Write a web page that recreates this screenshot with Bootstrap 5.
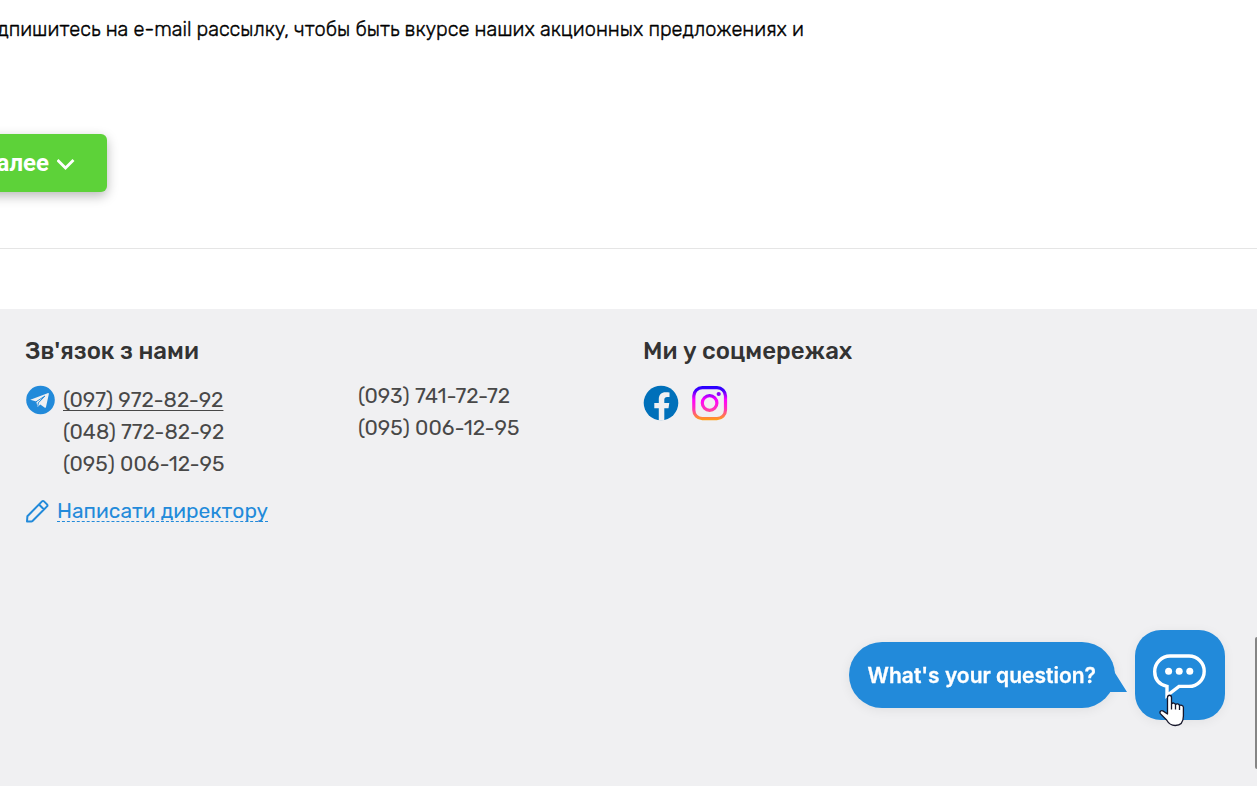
<!DOCTYPE html>
<html lang="uk">
<head>
<meta charset="utf-8">
<meta name="viewport" content="width=device-width, initial-scale=1">
<title>Контакти</title>
<link href="https://cdn.jsdelivr.net/npm/bootstrap@5.3.0/dist/css/bootstrap.min.css" rel="stylesheet">
<style>
  body { font-family: Rubik, Inter, Roboto, sans-serif; overflow: hidden; background: #fff; color: #000; }
  .intro-line { width: 804px; max-width: 100%; padding-top: 14px; font-size: 20px; line-height: 30px; font-weight: 300; -webkit-text-stroke: .4px #000; }
  .more-wrap { width: 107px; margin-top: 90px; margin-bottom: 56px; }
  .btn-more { --bs-btn-color: #fff; --bs-btn-bg: #5dd239; --bs-btn-hover-color: #fff; --bs-btn-hover-bg: #52c030;
    height: 58px; padding: 0 32px; border: 0; border-radius: 6px; font: 700 24px/58px Roboto, sans-serif;
    box-shadow: 0 4px 12px rgba(0,0,0,.28); }
  .divider { border-top: 1px solid #e5e5e5; height: 61px; }
  .site-footer { background: #f0f0f2; color: #484848; padding: 27px 25px 0; font-size: 21px; line-height: 32px; }
  .footer-grid { display: grid; grid-template-columns: 333fr 285fr 589fr; }
  .footer-title { font-size: 24px; line-height: 30px; font-weight: 500; color: #333; margin: 0; }
  .phones { padding-top: 44px; }
  .phones a, .phones-list a { color: inherit; text-decoration: none; }
  .phones-list { padding-top: 18px; }
  .phones-list a.main { text-decoration: underline; text-decoration-thickness: 1px; text-underline-offset: 3px; }
  .write { color: #228ada; margin-top: 19px; line-height: 28px; }
  .write a { color: inherit; text-decoration: none; line-height: 20px; border-bottom: 1px dashed #228ada; }
  .socials { padding-top: 19px; gap: 13px; }
  .chat { right: 32px; bottom: 66px; gap: 20px; }
  .chat-tip { background: #228ada; color: #fff; height: 66px; padding: 0 19px; border-radius: 33px; font: 600 21px/68px Inter, sans-serif; -webkit-text-stroke: .3px #fff; box-shadow: 0 2px 12px rgba(0,0,0,.07); }
  .chat-tail { right: -12px; bottom: 16px; }
  .btn-chat { --bs-btn-bg: #228ada; --bs-btn-hover-bg: #1d7fca; width: 90px; height: 90px; border: 0; border-radius: 26px; box-shadow: 0 2px 12px rgba(0,0,0,.06); }
  .pointer { left: 24px; top: 64px; pointer-events: none; }
  .scroll-mark { right: 0; bottom: 17px; width: 2px; height: 132px; background: #858585; border-radius: 2px 0 0 2px; }
</style>
</head>
<body class="min-vh-100 d-flex flex-column">
<main>
  <p class="intro-line d-flex justify-content-end text-nowrap mb-0">дпишитесь на e-mail рассылку, чтобы быть вкурсе наших акционных предложениях и</p>
  <div class="more-wrap d-flex justify-content-end">
    <button type="button" class="btn btn-more d-flex align-items-center flex-shrink-0 gap-2">Далее
      <svg width="18" height="14" viewBox="0 0 18 14" fill="none" stroke="#fff" stroke-width="2.8" aria-hidden="true"><path d="M.5 4 8.500 12 16.500 4"/></svg>
    </button>
  </div>
  <div class="divider"></div>
</main>
<footer class="site-footer flex-grow-1">
  <div class="footer-grid">
    <section>
      <h2 class="footer-title">Зв'язок з нами</h2>
      <div class="phones-list d-flex gap-2">
        <svg width="30" height="32" viewBox="0 0 30 32" class="flex-shrink-0" aria-hidden="true"><g transform="translate(0 1)"><circle cx="15.500" cy="15" r="14.300" fill="#228ada"/><path fill="#f0f0f2" d="M6 14.400 22.600 8.200c.8-.3 1.400.2 1.200 1.100l-2.800 12.600c-.2.900-.8 1.100-1.500.7l-4.200-3.100-2.100 2.100c-.5.5-.8.300-.9-.3l-1-4.700-5.200-1.500c-.8-.200-.8-.5-.1-.7z"/><path fill="none" stroke="#228ada" stroke-width="1" d="m11 16.800 9-5.800-6.700 6.900-.5 3.600"/></g></svg>
        <div class="d-flex flex-column">
          <a class="main" href="tel:0979728292">(097) 972-82-92</a>
          <a href="tel:0487728292">(048) 772-82-92</a>
          <a href="tel:0950061295">(095) 006-12-95</a>
        </div>
      </div>
      <div class="write d-flex align-items-center gap-2">
        <svg width="24" height="24" viewBox="0 0 24 24" fill="none" stroke="#228ada" stroke-width="2" stroke-linejoin="round" aria-hidden="true"><path d="M2 22.500 2.400 17.200 17 2.400q1-1 2 0l3 3q1 1 0 2L7.500 22q-.5.500-1.200.5zM14 5.500l5 5"/></svg>
        <a href="#">Написати директору</a>
      </div>
    </section>
    <section class="phones d-flex flex-column align-items-start">
      <a href="tel:0937417272">(093) 741-72-72</a>
      <a href="tel:0950061295">(095) 006-12-95</a>
    </section>
    <section>
      <h2 class="footer-title">Ми у соцмережах</h2>
      <div class="socials d-flex">
        <a href="#" class="d-flex" aria-label="Facebook"><svg width="36" height="36" viewBox="0 0 36 36"><circle cx="18" cy="18" r="17.300" fill="#0070ba"/><path fill="#f0f0f2" d="M15.800 35.500V23.200H11.300v-5.100h4.500v-3.900c0-4.500 2.700-7 6.700-7 1.500 0 3 .2 4 .4v4.300h-2.300c-2.300 0-2.900 1.400-2.900 2.900v3.300h5l-.8 5.100h-4.200v12.300z"/></svg></a>
        <a href="#" class="d-flex" aria-label="Instagram"><svg width="36" height="36" viewBox="0 0 36 36" fill="none" stroke="url(#ig)" stroke-width="3.200"><defs><linearGradient id="ig" gradientUnits="userSpaceOnUse" x1="0" y1="1" x2="0" y2="35"><stop offset="0" stop-color="#20f"/><stop offset=".13" stop-color="#40f"/><stop offset=".4" stop-color="#f0f"/><stop offset=".65" stop-color="#ff2cc4"/><stop offset="1" stop-color="#ffa012"/></linearGradient></defs><rect x="1.800" y="2.600" width="31.700" height="31" rx="8.500"/><circle cx="17.600" cy="18" r="7.300"/><circle cx="26.700" cy="9" r="2.100" fill="#9000ff" stroke="none"/></svg></a>
      </div>
    </section>
  </div>
</footer>
<div class="chat position-fixed d-flex align-items-center">
  <div class="chat-tip position-relative text-nowrap">What's your question?
    <svg class="chat-tail position-absolute" width="22" height="24" viewBox="0 0 22 24" aria-hidden="true"><path fill="#228ada" d="M0 0h8.500Q9 3 10 5L22 24H0z"/></svg>
  </div>
  <button type="button" class="btn btn-chat position-relative p-0" aria-label="Chat">
    <svg class="position-absolute top-0 start-0" width="90" height="90" viewBox="0 0 90 90" aria-hidden="true"><path fill="none" stroke="#fff" stroke-width="3.400" d="M35 26H54A15.200 15.200 0 0 1 54 56.400H44L32 65.500V56.400C24 54.500 19.700 49 19.700 41.500 19.700 33 27 26 35 26z"/><g fill="#fff"><circle cx="33.600" cy="41.300" r="3.500"/><circle cx="44.200" cy="41.300" r="3.500"/><circle cx="54.800" cy="41.300" r="3.500"/></g></svg>
    <svg class="pointer position-absolute" width="26" height="33" viewBox="0 0 26 33" aria-hidden="true"><path fill="#fff" stroke="#16162a" stroke-width="1.300" stroke-linejoin="round" d="M8.500 20V3.500c0-3 4-3 4 0V10c1-1.600 3.600-1.200 4 .6 1.200-1.200 3.600-.8 4 1 1.200-1 3.800-.4 3.900 1.600V22c0 6-3 9.500-8.200 9.500-4.400 0-6.700-2.100-8.600-5.500L1.300 19.600c-1-2.200 1-3.700 3-2.500z"/><path fill="none" stroke="#16162a" stroke-width="1.300" d="M12.500 10v5.500M16.500 10.600v5M20.500 11.600v4.500"/></svg>
  </button>
</div>
<div class="scroll-mark position-fixed"></div>
<script src="https://cdn.jsdelivr.net/npm/bootstrap@5.3.0/dist/js/bootstrap.bundle.min.js"></script>
</body>
</html>
